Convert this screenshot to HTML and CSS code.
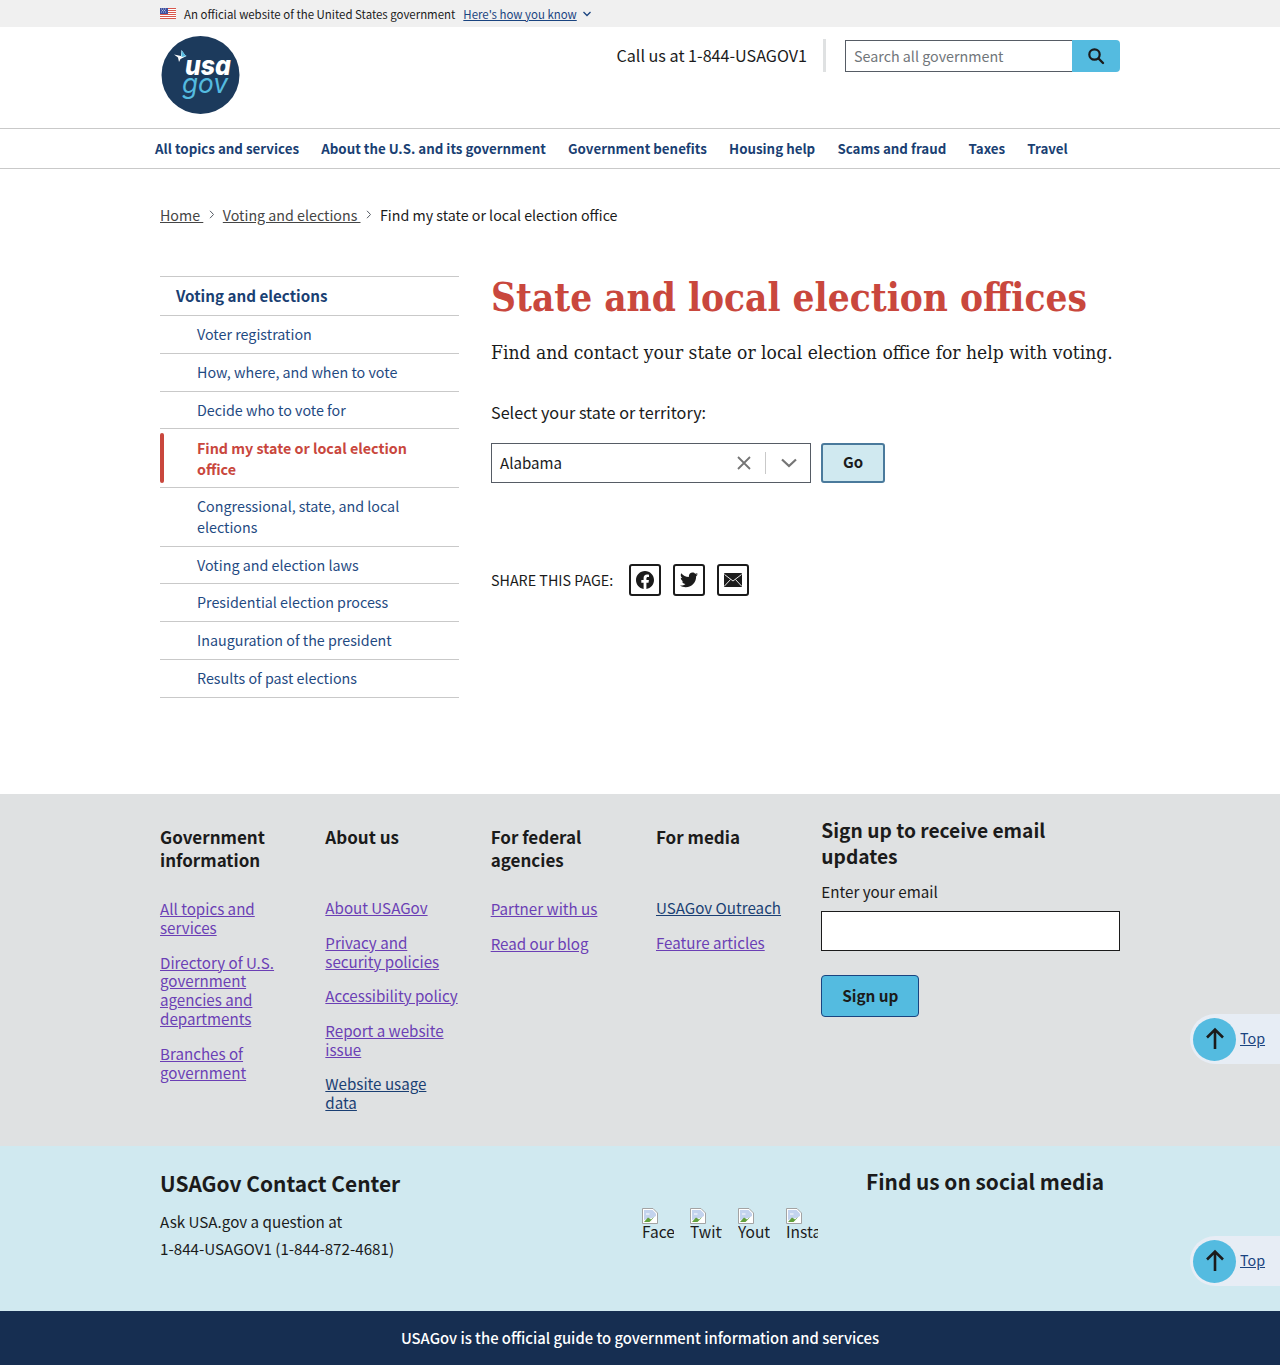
FILE: index.html
```html
<!DOCTYPE html>
<html lang="en">
<head>
<meta charset="utf-8">
<title>State and local election offices | USAGov</title>
<link rel="stylesheet" href="styles.css">
</head>
<body>
<div class="banner">
  <div class="wrap banner-in">
    <svg class="flag" width="16" height="11" viewBox="0 0 16 11" aria-hidden="true"><rect width="16" height="11" fill="#fff"/><path d="M0 .5h16M0 2.5h16M0 4.5h16M0 6.5h16M0 8.5h16M0 10.5h16" stroke="#d8574c" stroke-width="1"/><rect width="8" height="6" fill="#3d4f9f"/><path d="M1 1h.8M3 1h.8M5 1h.8M2 2.5h.8M4 2.5h.8M1 4h.8M3 4h.8M5 4h.8" stroke="#fff" stroke-width=".8"/></svg>
    <span class="banner-text">An official website of the United States government</span>
    <a class="banner-link" href="#">Here's how you know</a>
    <svg class="banner-chev" width="10" height="6" viewBox="0 0 10 6" aria-hidden="true"><path d="M1.5 1l3.5 3.5L8.500 1" fill="none" stroke="#1a4480" stroke-width="1.300"/></svg>
  </div>
</div>
<header class="header">
  <div class="wrap header-in">
    <svg class="logo" width="80" height="80" viewBox="0 0 80 80" role="img" aria-label="USAGov logo">
      <circle cx="40.500" cy="40" r="39" fill="#1c3a5c"/>
      <path d="M14 19.500l7 1.500 .5-6 3.500 5 1.500 1-6 3-1.500 3-1-4.500z" fill="#fff"/>
      <path d="M21.500 15l3.500 5 1.500 1-5 1z" fill="#54bbe0"/>
      <text class="logo-usa" x="25" y="40" textLength="46" lengthAdjust="spacingAndGlyphs">usa</text>
      <text class="logo-gov" x="22" y="58" textLength="46" lengthAdjust="spacingAndGlyphs">gov</text>
    </svg>
    <div class="header-right">
      <span class="call">Call us at 1-844-USAGOV1</span>
      <span class="vrule"></span>
      <form class="search">
        <input class="search-input" type="text" placeholder="Search all government" aria-label="Search all government">
        <button class="search-btn" type="button" aria-label="Search">
          <svg width="18" height="18" viewBox="0 0 18 18" aria-hidden="true"><circle cx="7.500" cy="7.500" r="5.200" fill="none" stroke="#1b1b1b" stroke-width="2.200"/><path d="M11.500 11.500l4.500 4.500" stroke="#1b1b1b" stroke-width="2.400" stroke-linecap="round"/></svg>
        </button>
      </form>
    </div>
  </div>
</header>
<nav class="nav">
  <div class="wrap nav-in">
    <a href="#">All topics and services</a>
    <a href="#">About the U.S. and its government</a>
    <a href="#">Government benefits</a>
    <a href="#">Housing help</a>
    <a href="#">Scams and fraud</a>
    <a href="#">Taxes</a>
    <a href="#">Travel</a>
  </div>
</nav>
<div class="wrap crumbs">
  <a href="#">Home </a>
  <svg class="crumb-sep" width="6" height="9" viewBox="0 0 6 9" aria-hidden="true"><path d="M1 .8L4.500 4.500 1 8.200" fill="none" stroke="#565c65" stroke-width="1"/></svg>
  <a href="#">Voting and elections </a>
  <svg class="crumb-sep" width="6" height="9" viewBox="0 0 6 9" aria-hidden="true"><path d="M1 .8L4.500 4.500 1 8.200" fill="none" stroke="#565c65" stroke-width="1"/></svg>
  <span>Find my state or local election office</span>
</div>
<div class="wrap page">
  <aside class="side">
    <a class="side-head" href="#">Voting and elections</a>
    <a class="side-item" href="#">Voter registration</a>
    <a class="side-item" href="#">How, where, and when to vote</a>
    <a class="side-item" href="#">Decide who to vote for</a>
    <a class="side-item current" href="#">Find my state or local election office</a>
    <a class="side-item" href="#">Congressional, state, and local elections</a>
    <a class="side-item" href="#">Voting and election laws</a>
    <a class="side-item" href="#">Presidential election process</a>
    <a class="side-item" href="#">Inauguration of the president</a>
    <a class="side-item" href="#">Results of past elections</a>
  </aside>
  <main class="main">
    <h1>State and local election offices</h1>
    <p class="lede">Find and contact your state or local election office for help with voting.</p>
    <div class="select-label">Select your state or territory:</div>
    <div class="select-row">
      <div class="combo">
        <span class="combo-val">Alabama</span>
        <svg class="combo-x" width="16" height="16" viewBox="0 0 16 16" aria-hidden="true"><path d="M2 2l12 12M14 2L2 14" stroke="#757575" stroke-width="1.800"/></svg>
        <span class="combo-rule"></span>
        <svg class="combo-chev" width="18" height="10" viewBox="0 0 18 10" aria-hidden="true"><path d="M2 1.500l7 6.500 7-6.500" fill="none" stroke="#757575" stroke-width="2.200"/></svg>
      </div>
      <button class="go" type="button">Go</button>
    </div>
    <div class="share">
      <span class="share-label">SHARE THIS PAGE:</span>
      <a class="share-btn" href="#" aria-label="Facebook"><svg width="18" height="18" viewBox="0 0 24 24" aria-hidden="true"><path fill="#1b1b1b" d="M24 12.070C24 5.400 18.630 0 12 0S0 5.400 0 12.070c0 6.030 4.390 11.020 10.130 11.930v-8.440H7.080v-3.490h3.050V9.410c0-3.020 1.790-4.690 4.530-4.690 1.310 0 2.690.240 2.690.240v2.970h-1.510c-1.490 0-1.960.930-1.960 1.880v2.260h3.330l-.53 3.490h-2.800V24C19.610 23.090 24 18.100 24 12.070z"/></svg></a>
      <a class="share-btn" href="#" aria-label="Twitter"><svg width="18" height="16" viewBox="0 0 24 20" aria-hidden="true"><path fill="#1b1b1b" d="M24 2.400c-.9.400-1.800.700-2.800.800 1-.6 1.800-1.600 2.200-2.700-1 .6-2 1-3.100 1.200C19.400.7 18.100 0 16.700 0c-2.700 0-4.900 2.200-4.900 4.900 0 .4 0 .8.100 1.100C7.700 5.800 4.100 3.900 1.700.9c-.4.700-.7 1.600-.7 2.500 0 1.700.9 3.200 2.200 4.100-.8 0-1.600-.2-2.200-.6v.1c0 2.400 1.700 4.400 3.900 4.800-.4.100-.8.200-1.300.2-.3 0-.6 0-.9-.1.600 2 2.400 3.400 4.600 3.400-1.700 1.300-3.800 2.100-6.100 2.100-.4 0-.8 0-1.200-.1C2.200 18.700 4.800 19.500 7.500 19.500c9.100 0 14-7.500 14-14v-.6c1-.7 1.800-1.600 2.500-2.500z"/></svg></a>
      <a class="share-btn" href="#" aria-label="Email"><svg width="18" height="14" viewBox="0 0 18 14" aria-hidden="true"><rect width="18" height="14" rx="1" fill="#1b1b1b"/><path d="M.5 1.500L9 8l8.500-6.500M.5 13l6-6.500M17.500 13l-6-6.500" fill="none" stroke="#fff" stroke-width=".9"/></svg></a>
    </div>
  </main>
</div>
<footer>
  <section class="foot-links">
    <div class="wrap foot-grid">
      <div class="foot-col">
        <h2>Government information</h2>
        <a href="#">All topics and services</a>
        <a href="#">Directory of U.S. government agencies and departments</a>
        <a href="#">Branches of government</a>
      </div>
      <div class="foot-col">
        <h2 class="one">About us</h2>
        <a href="#">About USAGov</a>
        <a href="#">Privacy and security policies</a>
        <a href="#">Accessibility policy</a>
        <a href="#">Report a website issue</a>
        <a class="unvisited" href="#">Website usage data</a>
      </div>
      <div class="foot-col">
        <h2>For federal agencies</h2>
        <a href="#">Partner with us</a>
        <a href="#">Read our blog</a>
      </div>
      <div class="foot-col">
        <h2 class="one">For media</h2>
        <a class="unvisited" href="#">USAGov Outreach</a>
        <a href="#">Feature articles</a>
      </div>
      <form class="signup">
        <h2>Sign up to receive email updates</h2>
        <label class="email-label" for="email">Enter your email</label>
        <input class="email" id="email" type="email">
        <button class="signup-btn" type="button">Sign up</button>
      </form>
    </div>
  </section>
  <section class="foot-contact">
    <div class="wrap contact-in">
      <div class="contact-info">
        <h2>USAGov Contact Center</h2>
        <p>Ask USA.gov a question at</p>
        <p>1-844-USAGOV1 (1-844-872-4681)</p>
      </div>
      <div class="socials">
        <a class="soc" href="#"><svg width="16" height="16" viewBox="0 0 16 16" aria-hidden="true"><use href="#broken"/></svg><span>Facebook</span></a>
        <a class="soc" href="#"><svg width="16" height="16" viewBox="0 0 16 16" aria-hidden="true"><use href="#broken"/></svg><span>Twitter</span></a>
        <a class="soc" href="#"><svg width="16" height="16" viewBox="0 0 16 16" aria-hidden="true"><use href="#broken"/></svg><span>Youtube</span></a>
        <a class="soc" href="#"><svg width="16" height="16" viewBox="0 0 16 16" aria-hidden="true"><use href="#broken"/></svg><span>Instagram</span></a>
      </div>
      <h2 class="social-head">Find us on social media</h2>
    </div>
  </section>
  <section class="foot-bar">USAGov is the official guide to government information and services</section>
</footer>
<a class="top top-a" href="#"><span class="top-circle"><svg width="22" height="24" viewBox="0 0 22 24" aria-hidden="true"><path d="M11 22V3M3 10.500L11 2.500l8 8" fill="none" stroke="#1b1b1b" stroke-width="2.600"/></svg></span><span class="top-text">Top</span></a>
<a class="top top-b" href="#"><span class="top-circle"><svg width="22" height="24" viewBox="0 0 22 24" aria-hidden="true"><path d="M11 22V3M3 10.500L11 2.500l8 8" fill="none" stroke="#1b1b1b" stroke-width="2.600"/></svg></span><span class="top-text">Top</span></a>
<svg class="defs" width="0" height="0" aria-hidden="true"><defs><g id="broken"><path d="M.5.500h10.500l4.500 4.500v10.500H.5z" fill="#fff" stroke="#a3a3a3"/><path d="M2 2h8.500l3.500 3.500V9L2 12z" fill="#c3d3ee"/><path d="M4 5.500h3.500v1H4z" fill="#fff"/><path d="M2 14l4-4.500 3 2 3-2.500-3 5z" fill="#62a03c"/><path d="M8 14.500l6-6" stroke="#fff" stroke-width="1.500"/></g></defs></svg>
</body>
</html>
```

FILE: styles.css
```css
* { box-sizing: border-box; }
html, body { margin: 0; padding: 0; }
body {
  position: relative;
  width: 1280px;
  height: 1365px;
  overflow: hidden;
  background: #fff;
  color: #1b1b1b;
  font-family: "Noto Sans CJK SC", "Noto Sans", sans-serif;
  font-size: 14.300px;
}
.wrap { width: 960px; margin: 0 auto; }
.defs { position: absolute; }

.banner { height: 27px; background: #f0f0f0; }
.banner-in { display: flex; align-items: center; height: 27px; font-size: 11.450px; }
.flag { margin-right: 8px; }
.banner-text { margin-right: 8px; }
.banner-link { color: #1a4480; text-decoration: underline; }
.banner-chev { margin-left: 5px; }

.header { height: 102px; border-bottom: 1px solid #c9c9c9; }
.header-in { display: flex; justify-content: space-between; align-items: flex-start; height: 101px; }
.logo { margin-top: 8px; }
.logo-usa { font: italic 800 27px "Inter", sans-serif; fill: #fff; }
.logo-gov { font: italic 400 27px "Inter", sans-serif; fill: #54bbe0; }
.header-right { display: flex; align-items: center; padding-top: 12px; }
.call { padding-bottom: 2px; font-size: 16.150px; }
.vrule { width: 3px; height: 33px; background: #dfe1e2; margin: 0 19px 0 16px; }
.search { display: flex; width: 275px; height: 32px; }
.search-input {
  flex: 1;
  min-width: 0;
  height: 32px;
  padding: 0 8px;
  border: 1px solid #565c65;
  border-right: 0;
  font: 14.300px "Noto Sans CJK SC", sans-serif;
}
.search-input::placeholder { color: #71767a; opacity: 1; }
.search-btn {
  display: flex;
  align-items: center;
  justify-content: center;
  width: 48px;
  height: 32px;
  border: 0;
  border-radius: 0 4px 4px 0;
  background: #54bbe0;
}

.nav { height: 40px; border-bottom: 1px solid #c9c9c9; }
.nav-in { display: flex; align-items: center; gap: 22.200px; height: 39px; margin-left: 155px; }
.nav-in a { color: #1a3f73; font-size: 13.330px; font-weight: 700; text-decoration: none; white-space: nowrap; }

.crumbs { display: flex; align-items: center; height: 24px; margin-top: 33px; color: #1b1b1b; font-size: 14.260px; white-space: pre; }
.crumbs a { color: #454545; text-decoration: underline; }
.crumb-sep { margin: 0 8px 0 5.500px; }

.page { display: flex; gap: 32px; margin-top: 50px; height: 518px; }
.side { width: 299px; flex: none; border-top: 1px solid #c9c9c9; }
.side-head, .side-item {
  display: block;
  border-bottom: 1px solid #c9c9c9;
  color: #1f4a82;
  text-decoration: none;
  line-height: 20.800px;
}
.side-head { padding: 8px 16px 9.300px; font-weight: 700; font-size: 15.200px; color: #1a3f73; }
.side-item { position: relative; padding: 8px 37px; font-size: 14.300px; }
.side-item.current { color: #c9473d; font-weight: 700; padding: 9px 40px 7px 37px; }
.side-item.current::before {
  content: "";
  position: absolute;
  left: 0;
  top: 4px;
  bottom: 4px;
  width: 4px;
  border-radius: 2px;
  background: #c9473d;
}

.main { flex: 1; }
h1 {
  margin: 0;
  color: #c9473d;
  font: 700 38.400px/44px "DejaVu Serif Condensed", "DejaVu Serif", serif;
  white-space: nowrap;
}
.lede { margin: 20px 0 0; font: 400 19.100px/26px "DejaVu Serif Condensed", "DejaVu Serif", serif; white-space: nowrap; color: #1b1b1b; }
.select-label { margin-top: 34px; font-size: 16.200px; line-height: 24px; }
.select-row { display: flex; gap: 10px; margin-top: 19px; }
.combo { display: flex; align-items: center; width: 320px; height: 40px; padding-left: 8px; border: 1px solid #565c65; }
.combo-val { flex: 1; padding-bottom: 2px; font-size: 15.100px; }
.combo-rule { width: 1px; height: 22px; margin: 0 14px 0 13px; background: #c9c9c9; }
.combo-chev { margin-right: 12px; }
.go {
  width: 64px;
  height: 40px;
  padding: 0 0 3px;
  border: 2px solid #4a7a9c;
  border-radius: 3px;
  background: #d0e9f0;
  color: #1b1b1b;
  font: 700 15px "Noto Sans CJK SC", sans-serif;
}
.share { display: flex; align-items: center; margin-top: 81px; }
.share-label { margin-right: 16px; padding-bottom: 2px; font-size: 14.300px; }
.share-btn {
  display: flex;
  align-items: center;
  justify-content: center;
  width: 32px;
  height: 32px;
  margin-right: 12px;
  border: 2px solid #1b1b1b;
  border-radius: 3px;
}

.foot-links { height: 352px; background: #dfe1e2; }
.foot-grid { display: flex; gap: 32px; }
.foot-col { width: 133.330px; flex: none; padding-top: 31px; }
.foot-col h2 { margin: 0 0 28px; font-size: 17px; line-height: 23px; font-weight: 700; }
.foot-col h2.one { margin-bottom: 50px; }
.foot-col a {
  display: block;
  margin-bottom: 15.700px;
  color: #6b3fb5;
  font-size: 15.150px;
  line-height: 18.900px;
  text-decoration: underline;
}
.foot-col a.unvisited { color: #1a3f73; }
.signup { flex: 1; padding-top: 23px; }
.signup h2 { margin: 0; font-size: 19.200px; line-height: 26px; font-weight: 700; }
.email-label { display: block; margin-top: 10px; font-size: 15.200px; line-height: 24px; }
.email { display: block; width: 100%; height: 40px; margin-top: 8px; border: 1px solid #1b1b1b; background: #fff; }
.signup-btn {
  display: block;
  width: 98px;
  height: 42px;
  margin-top: 24px;
  padding: 0 0 3px;
  border: 1px solid #1a4480;
  border-radius: 4px;
  background: #54bbe0;
  color: #1b1b1b;
  font: 700 15.300px "Noto Sans CJK SC", sans-serif;
}

.foot-contact { height: 165px; background: #d0e9f0; }
.contact-in { display: flex; position: relative; height: 165px; }
.contact-info { width: 482px; flex: none; padding-top: 21px; }
.contact-info h2 { margin: 0 0 9px; font-size: 20.900px; line-height: 32px; font-weight: 700; }
.contact-info p { margin: 0; font-size: 15.200px; line-height: 27px; }
.socials { display: flex; gap: 16px; width: 224px; flex: none; padding-top: 62px; }
.soc { display: block; width: 32px; height: 32px; overflow: hidden; color: #1b1b1b; text-decoration: none; font-size: 15.500px; line-height: 15px; white-space: nowrap; }
.soc svg { display: block; }
.social-head { margin: 19px 0 0; font-size: 20.850px; line-height: 32px; font-weight: 700; white-space: nowrap; }

.foot-bar { display: flex; align-items: center; justify-content: center; height: 54px; padding-bottom: 2px; background: #162e51; color: #fff; font-size: 14.800px; font-weight: 500; }

.top {
  position: absolute;
  left: 1190px;
  display: flex;
  align-items: center;
  width: 90px;
  height: 50px;
  padding-left: 3px;
  border-radius: 25px 0 0 25px;
  background: #e7edf5;
  text-decoration: none;
}
.top-a { top: 1014px; }
.top-b { top: 1236px; }
.top-circle { display: flex; align-items: center; justify-content: center; width: 43px; height: 43px; border-radius: 50%; background: #54bbe0; }
.top-text { margin: 0 0 3px 4px; color: #1a4480; font-size: 14.300px; text-decoration: underline; }
```
